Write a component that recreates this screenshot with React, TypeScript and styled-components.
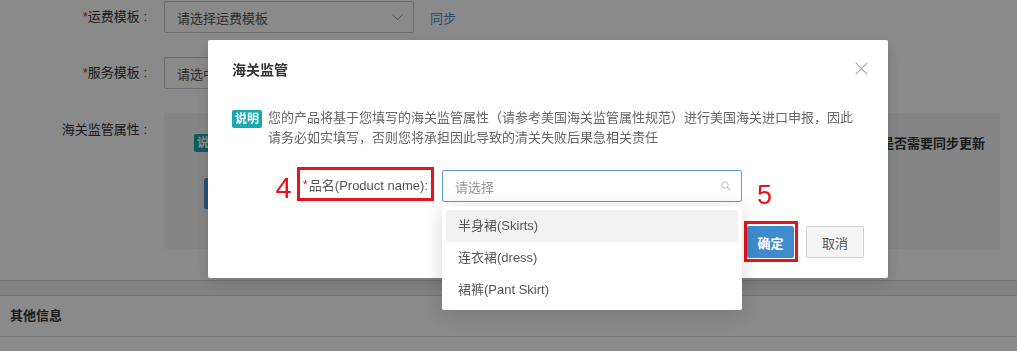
import React, {FC, ReactNode} from 'react';
import styled, {createGlobalStyle} from 'styled-components';

const GlobalStyle = createGlobalStyle`
  html, body {
    margin: 0;
    padding: 0;
    background: #fff;
    font-family: "Liberation Sans", "Noto Sans CJK SC", sans-serif;
    font-size: 13px;
    color: #333;
  }
`;

const RED = '#e8141c';

/* ---------- page behind the dialog ---------- */

const Page = styled.div`
  width: 1017px;
  height: 351px;
  overflow: hidden;
  background: #fff;
`;

const Card = styled.div`
  display: flex;
  flex-direction: column;
  gap: 24px;
  padding: 1px 0 31px;
  border-bottom: 1px solid #d6d6d6;
`;

const FormRow = styled.div<{$top?: boolean}>`
  display: flex;
  align-items: ${p => (p.$top ? 'flex-start' : 'center')};
`;

const FieldLabel = styled.div<{$top?: boolean}>`
  width: 147px;
  margin-right: 17px;
  text-align: right;
  font-size: 13px;
  line-height: 20px;
  color: #333;
  white-space: nowrap;
  padding-top: ${p => (p.$top ? '7px' : '0')};

  em {
    font-style: normal;
    color: ${RED};
  }
`;

const Select = styled.div`
  display: flex;
  align-items: center;
  justify-content: space-between;
  box-sizing: border-box;
  width: 250px;
  height: 32px;
  padding: 0 10px 0 12px;
  border: 1px solid #ccc;
  border-radius: 2px;
  color: #555;
`;

const SyncLink = styled.span`
  margin-left: 16px;
  color: #4a8fd8;
`;

const Panel = styled.div`
  flex: 1;
  margin-right: 17px;
  padding: 20px 15px 40px 30px;
  background: #f5f5f5;
`;

const PanelTop = styled.div`
  display: flex;
  align-items: center;
  justify-content: space-between;
`;

const Tag = styled.span`
  display: inline-block;
  padding: 0 3px;
  height: 18px;
  line-height: 18px;
  border-radius: 2px;
  background: #17a9ad;
  color: #fff;
  font-size: 12px;
  font-weight: bold;
  flex: none;
`;

const StrongNote = styled.span`
  font-weight: bold;
  color: #333;
`;

const PanelButton = styled.div`
  margin: 26px 0 0 10px;
  width: 90px;
  height: 31px;
  border-radius: 2px;
  background: #4c95d6;
`;

const GapBand = styled.div`
  height: 14px;
  background: #f0f0f0;
  border-bottom: 1px solid #d6d6d6;
`;

const SectionHeader = styled.div`
  height: 40px;
  line-height: 40px;
  padding-left: 10px;
  font-weight: bold;
  color: #333;
  border-bottom: 1px solid #e3e3e3;
`;

/* ---------- dialog ---------- */

const Overlay = styled.div`
  position: fixed;
  inset: 0;
  background: rgba(0, 0, 0, 0.46);
  padding: 40px 0 0 208px;
`;

const Modal = styled.div`
  width: 680px;
  background: #fff;
  border-radius: 2px;
  box-shadow: 0 4px 14px rgba(0, 0, 0, 0.15);
`;

const ModalHeader = styled.div`
  display: flex;
  align-items: center;
  justify-content: space-between;
  padding: 20px 20px 20px 24px;
`;

const Title = styled.div`
  font-size: 14px;
  line-height: 20px;
  font-weight: bold;
  color: #333;
`;

const CloseBtn = styled.span`
  display: flex;
  width: 13px;
  height: 13px;
  margin-top: -3px;
`;

const ModalBody = styled.div`
  padding: 8px 24px 0;
`;

const Notice = styled.div`
  display: flex;
  align-items: flex-start;
  gap: 6px;

  ${Tag} {
    margin-top: 2px;
  }
`;

const NoticeText = styled.p`
  margin: 0;
  font-size: 13px;
  line-height: 20px;
  color: #666;
`;

const DialogRow = styled.div`
  display: flex;
  align-items: flex-start;
  margin-top: 22px;
`;

const LabelCol = styled.div`
  width: 210px;
  display: flex;
  justify-content: flex-end;
  align-items: flex-start;
  padding-right: 8px;
  box-sizing: border-box;
`;

const StepNo = styled.span<{$size: number}>`
  font-size: ${p => p.$size}px;
  line-height: ${p => p.$size}px;
  color: ${RED};
`;

const StepFour = styled(StepNo)`
  margin: 4px 5px 0 0;
`;

const MarkedLabel = styled.label`
  box-sizing: border-box;
  height: 34px;
  margin-top: -3px;
  padding: 0 3px;
  border: 3px solid ${RED};
  display: flex;
  align-items: center;
  color: #555;
  font-size: 13px;

  em {
    font-style: normal;
    color: ${RED};
    margin-right: 1px;
  }
`;

const SearchBox = styled.div`
  position: relative;
  width: 300px;
`;

const SearchInput = styled.div`
  display: flex;
  align-items: center;
  justify-content: space-between;
  box-sizing: border-box;
  height: 32px;
  padding: 0 10px 0 12px;
  border: 1px solid #5b9fd8;
  border-radius: 2px;
  color: #999;
`;

const Dropdown = styled.ul`
  position: absolute;
  top: calc(100% + 4px);
  left: 0;
  right: 0;
  margin: 0;
  padding: 4px;
  list-style: none;
  background: #fff;
  border-radius: 2px;
  box-shadow: 0 3px 20px rgba(0, 0, 0, 0.16);
  z-index: 2;
`;

const Option = styled.li<{$active?: boolean}>`
  height: 32px;
  line-height: 32px;
  padding: 0 12px;
  border-radius: 2px;
  color: #555;
  background: ${p => (p.$active ? '#f1f1f1' : 'transparent')};
`;

const Footer = styled.div`
  display: flex;
  justify-content: flex-end;
  gap: 12px;
  margin-top: 23px;
  padding: 0 24px 20px;
`;

const ButtonWrap = styled.div`
  position: relative;
`;

const Button = styled.button<{$primary?: boolean}>`
  box-sizing: border-box;
  height: 32px;
  padding: 0;
  width: ${p => (p.$primary ? '47px' : '58px')};
  font-family: inherit;
  font-size: 13px;
  font-weight: ${p => (p.$primary ? 'bold' : 'normal')};
  border-radius: 2px;
  border: 1px solid ${p => (p.$primary ? '#3d8bcf' : '#cfcfcf')};
  background: ${p => (p.$primary ? '#3f8bcd' : '#f5f5f5')};
  color: ${p => (p.$primary ? '#fff' : '#555')};
`;

const MarkBox = styled.span`
  position: absolute;
  left: -3px;
  top: -5px;
  right: -4px;
  bottom: -4px;
  border: 3px solid ${RED};
  pointer-events: none;
`;

const StepFive = styled(StepNo)`
  position: absolute;
  left: 10px;
  top: -44px;
`;

const Chevron: FC = () => (
  <svg width="11" height="7" viewBox="0 0 11 7">
    <polyline points="0.5,0.5 5.5,5.8 10.5,0.5" fill="none" stroke="#999" strokeWidth="1" />
  </svg>
);

const SearchIcon: FC = () => (
  <svg width="10" height="10" viewBox="0 0 10 10">
    <circle cx="4" cy="4" r="3.2" fill="none" stroke="#bbb" strokeWidth="1" />
    <line x1="6.4" y1="6.4" x2="9.3" y2="9.3" stroke="#bbb" strokeWidth="1.2" />
  </svg>
);

const CloseIcon: FC = () => (
  <svg width="13" height="13" viewBox="0 0 13 13">
    <path d="M0.8 0.8 L12.2 12.2 M12.2 0.8 L0.8 12.2" stroke="#a6a6a6" strokeWidth="1.1" fill="none" />
  </svg>
);

const Required: FC<{children: ReactNode}> = ({children}) => (
  <>
    <em>*</em>
    {children}
  </>
);

const options = ['半身裙(Skirts)', '连衣裙(dress)', '裙裤(Pant Skirt)'];

export default function App() {
  return (
    <>
      <GlobalStyle />
      <Page>
        <Card>
          <FormRow>
            <FieldLabel>
              <Required>运费模板 :</Required>
            </FieldLabel>
            <Select>
              请选择运费模板
              <Chevron />
            </Select>
            <SyncLink>同步</SyncLink>
          </FormRow>
          <FormRow>
            <FieldLabel>
              <Required>服务模板 :</Required>
            </FieldLabel>
            <Select>
              请选中
              <Chevron />
            </Select>
          </FormRow>
          <FormRow $top>
            <FieldLabel $top>海关监管属性 :</FieldLabel>
            <Panel>
              <PanelTop>
                <Tag>说明</Tag>
                <StrongNote>是否需要同步更新</StrongNote>
              </PanelTop>
              <PanelButton />
            </Panel>
          </FormRow>
        </Card>
        <GapBand />
        <SectionHeader>其他信息</SectionHeader>
      </Page>

      <Overlay>
        <Modal>
          <ModalHeader>
            <Title>海关监管</Title>
            <CloseBtn>
              <CloseIcon />
            </CloseBtn>
          </ModalHeader>
          <ModalBody>
            <Notice>
              <Tag>说明</Tag>
              <NoticeText>
                您的产品将基于您填写的海关监管属性（请参考美国海关监管属性规范）进行美国海关进口申报，因此
                <br />
                请务必如实填写，否则您将承担因此导致的清关失败后果急相关责任
              </NoticeText>
            </Notice>
            <DialogRow>
              <LabelCol>
                <StepFour $size={29}>4</StepFour>
                <MarkedLabel>
                  <Required>品名(Product name):</Required>
                </MarkedLabel>
              </LabelCol>
              <SearchBox>
                <SearchInput>
                  请选择
                  <SearchIcon />
                </SearchInput>
                <Dropdown>
                  {options.map((o, i) => (
                    <Option key={o} $active={i === 0}>
                      {o}
                    </Option>
                  ))}
                </Dropdown>
              </SearchBox>
            </DialogRow>
          </ModalBody>
          <Footer>
            <ButtonWrap>
              <StepFive $size={27}>5</StepFive>
              <Button $primary>确定</Button>
              <MarkBox />
            </ButtonWrap>
            <ButtonWrap>
              <Button>取消</Button>
            </ButtonWrap>
          </Footer>
        </Modal>
      </Overlay>
    </>
  );
}
